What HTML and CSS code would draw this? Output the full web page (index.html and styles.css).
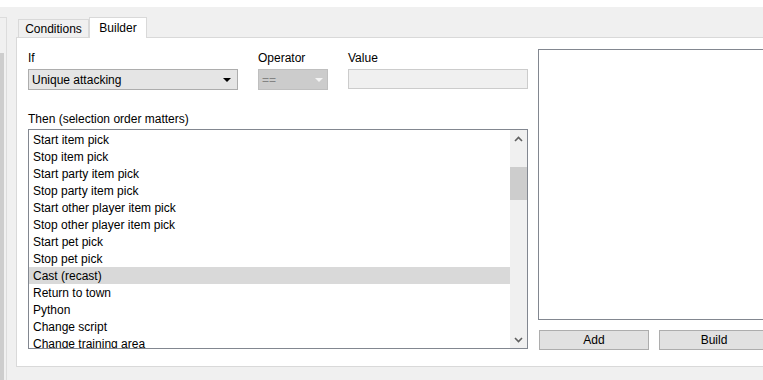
FILE: index.html
```html
<!DOCTYPE html>
<html lang="en">

<head>
    <meta charset="UTF-8">
    <meta name="viewport" content="width=device-width, initial-scale=1.0">
    <title>Builder</title>
    <link rel="stylesheet" href="styles.css">
</head>

<body>
    <div class="titlegap"></div>
    <div class="workspace">
        <div class="side">
            <div class="side-bar"></div>
        </div>
        <div class="tabs">
            <div class="tab-strip">
                <div class="tab">Conditions</div>
                <div class="tab active">Builder</div>
            </div>
            <div class="page">
                <div class="left">
                    <div class="fields">
                        <div class="field field-if">
                            <label>If</label>
                            <div class="combo">
                                <span>Unique attacking</span>
                                <span class="arrow"></span>
                            </div>
                        </div>
                        <div class="field field-op">
                            <label>Operator</label>
                            <div class="combo disabled">
                                <span>==</span>
                                <span class="arrow"></span>
                            </div>
                        </div>
                        <div class="field field-value">
                            <label>Value</label>
                            <div class="textbox"></div>
                        </div>
                    </div>
                    <label class="then">Then (selection order matters)</label>
                    <div class="listbox">
                        <ul class="items">
                            <li>Start item pick</li>
                            <li>Stop item pick</li>
                            <li>Start party item pick</li>
                            <li>Stop party item pick</li>
                            <li>Start other player item pick</li>
                            <li>Stop other player item pick</li>
                            <li>Start pet pick</li>
                            <li>Stop pet pick</li>
                            <li class="selected">Cast (recast)</li>
                            <li>Return to town</li>
                            <li>Python</li>
                            <li>Change script</li>
                            <li>Change training area</li>
                        </ul>
                        <div class="scrollbar">
                            <div class="scroll-btn">
                                <svg width="9" height="6" viewBox="0 0 9 6"><polyline points="1,5 4.5,1.5 8,5" fill="none" stroke="#606060" stroke-width="1.6"/></svg>
                            </div>
                            <div class="scroll-track">
                                <div class="thumb"></div>
                            </div>
                            <div class="scroll-btn">
                                <svg width="9" height="6" viewBox="0 0 9 6"><polyline points="1,1 4.5,4.5 8,1" fill="none" stroke="#606060" stroke-width="1.6"/></svg>
                            </div>
                        </div>
                    </div>
                </div>
                <div class="right">
                    <div class="listbox result"></div>
                    <div class="buttons">
                        <button>Add</button>
                        <button>Build</button>
                    </div>
                </div>
            </div>
        </div>
    </div>
</body>

</html>
```

FILE: styles.css
```css
* {
    margin: 0;
    padding: 0;
    box-sizing: border-box;
}

body {
    width: 763px;
    height: 380px;
    overflow: hidden;
    background: #f0f0f0;
    font-family: "Liberation Sans", Arial, sans-serif;
    font-size: 12px;
    color: #000;
}

.titlegap {
    height: 7px;
    background: #fff;
}

.workspace {
    display: flex;
    height: 373px;
    overflow: hidden;
}

/* edge of the panel on the left */
.side {
    flex-shrink: 0;
    width: 7px;
    margin-top: 10px;
    border-top: 1px solid #dcdcdc;
    border-right: 1px solid #dcdcdc;
    overflow: hidden;
}

.side-bar {
    width: 4px;
    height: 100%;
    margin-top: 35px;
    background: #cdcdcd;
}

.tabs {
    margin-left: 9px;
    flex: 1;
    min-width: 0;
    display: flex;
    flex-direction: column;
    padding-top: 10px;
}

.tab-strip {
    display: flex;
    align-items: flex-end;
    height: 20px;
    padding-left: 2px;
}

.tab {
    width: 71px;
    height: 18px;
    line-height: 19px;
    text-align: center;
    border: 1px solid #d9d9d9;
    border-bottom: none;
    background: #f0f0f0;
}

.tab.active {
    width: 58px;
    height: 21px;
    line-height: 20px;
    margin-bottom: -1px;
    background: #fff;
    position: relative;
}

.page {
    flex-shrink: 0;
    height: 330px;
    width: 760px;
    display: flex;
    padding: 11px 0 0 11px;
    background: #fff;
    border: 1px solid #d9d9d9;
    border-right: none;
}

.left {
    flex-shrink: 0;
    width: 500px;
    margin-top: 1px;
    display: flex;
    flex-direction: column;
}

.fields {
    display: flex;
    gap: 20px;
}

.field label,
.then {
    display: block;
    height: 14px;
    line-height: 16px;
}

.field label {
    margin-bottom: 5px;
}

.field-if {
    width: 210px;
}

.field-op {
    width: 70px;
}

.field-value {
    width: 180px;
}

.combo {
    height: 21px;
    display: flex;
    align-items: center;
    justify-content: space-between;
    padding: 0 6px 0 3px;
    background: #e5e5e5;
    border: 1px solid #adadad;
}

.combo .arrow {
    width: 0;
    height: 0;
    border-left: 4px solid transparent;
    border-right: 4px solid transparent;
    border-top: 4px solid #000;
}

.combo.disabled {
    background: #cccccc;
    border-color: #bfbfbf;
    color: #838383;
    padding-right: 4px;
}

.combo.disabled .arrow {
    border-top-color: #f4f4f4;
}

.textbox {
    height: 20px;
    background: #f0f0f0;
    border: 1px solid #cccccc;
}

.then {
    margin-top: 21px;
    margin-bottom: 4px;
}

.listbox {
    border: 1px solid #828790;
    background: #fff;
}

.left .listbox {
    height: 220px;
    display: flex;
    overflow: hidden;
}

.items {
    list-style: none;
    flex: 1;
    padding-top: 1px;
    overflow: hidden;
}

.items li {
    height: 17px;
    line-height: 19px;
    padding-left: 4px;
    white-space: nowrap;
    overflow: hidden;
}

.items li.selected {
    background: #d9d9d9;
}

.scrollbar {
    width: 17px;
    background: #f0f0f0;
    display: flex;
    flex-direction: column;
}

.scroll-btn {
    height: 17px;
    display: flex;
    align-items: center;
    justify-content: center;
}

.scroll-track {
    flex: 1;
    padding-top: 20px;
}

.thumb {
    height: 33px;
    background: #cdcdcd;
}

.right {
    flex-shrink: 0;
    margin-left: 10px;
    width: 240px;
    display: flex;
    flex-direction: column;
}

.listbox.result {
    height: 271px;
    border-right: none;
}

.buttons {
    display: flex;
    gap: 10px;
    margin-top: 10px;
    padding-left: 1px;
}

.buttons button {
    width: 110px;
    height: 20px;
    font-family: inherit;
    font-size: 12px;
    color: #000;
    background: #e1e1e1;
    border: 1px solid #adadad;
}
```
